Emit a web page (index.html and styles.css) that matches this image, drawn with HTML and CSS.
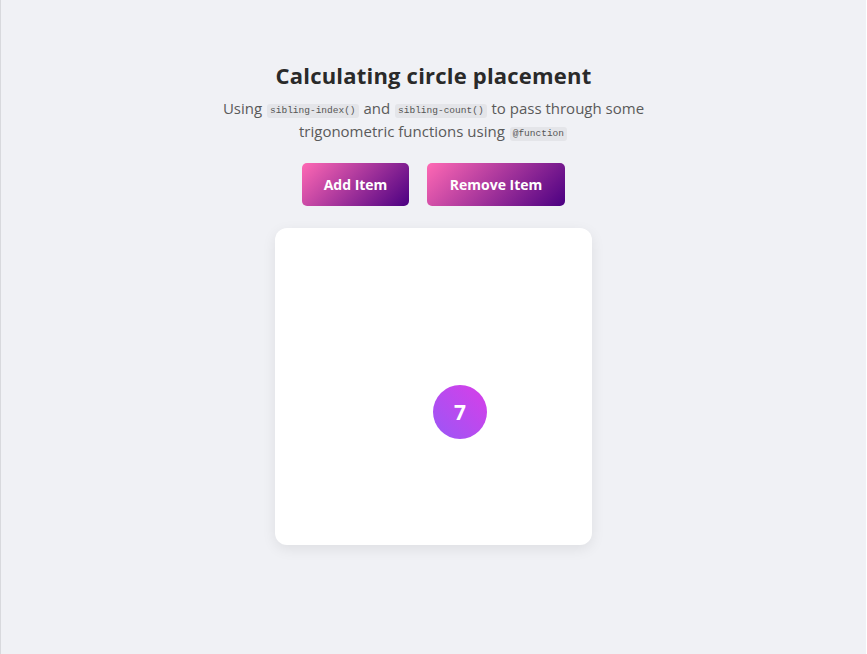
FILE: index.html
```html
<!DOCTYPE html>
<html lang="en">
<head>
<meta charset="utf-8">
<title>Calculating circle placement</title>
<link rel="stylesheet" href="styles.css">
</head>
<body>
<div class="page">
  <h1 class="title">Calculating circle placement</h1>
  <p class="subtitle">Using <code>sibling-index()</code> and <code>sibling-count()</code> to pass through some<br>trigonometric functions using <code>@function</code></p>
  <div class="actions">
    <button class="btn btn-add">Add Item</button>
    <button class="btn btn-remove">Remove Item</button>
  </div>
  <div class="stage">
    <div class="item">7</div>
  </div>
</div>
</body>
</html>
```
FILE: styles.css
```css
html, body {
  margin: 0;
  padding: 0;
}
body {
  background: #f0f1f5;
  font-family: "Open Sans", "DejaVu Sans", sans-serif;
  border-right: 1px solid #ffffff;
}
.page {
  min-height: 654px;
  box-sizing: border-box;
  border-left: 1px solid #d8d9dd;
  display: flex;
  flex-direction: column;
  align-items: center;
  padding-top: 61px;
}
.title {
  margin: 0;
  font-size: 22px;
  font-weight: 700;
  line-height: 28px;
  color: #2a2a2a;
  letter-spacing: 0.2px;
}
.subtitle {
  margin: 8px 0 0;
  text-align: center;
  font-size: 15px;
  line-height: 23px;
  color: #5a5a5a;
}
.subtitle code {
  display: inline-block;
  font-family: "Liberation Mono", "DejaVu Sans Mono", monospace;
  font-size: 9.5px;
  line-height: 14px;
  background: #e4e5e9;
  color: #555;
  padding: 0 3px;
  margin: 0 1px;
  border-radius: 3px;
  vertical-align: 1px;
}
.actions {
  display: flex;
  gap: 18px;
  margin-top: 20px;
}
.btn {
  border: none;
  height: 43px;
  border-radius: 5px;
  color: #ffffff;
  font-family: "Open Sans", "DejaVu Sans", sans-serif;
  font-weight: 700;
  font-size: 14px;
  background: linear-gradient(135deg, #ff69b4, #4b0082);
  padding: 0;
}
.btn-add {
  width: 107px;
}
.btn-remove {
  width: 138px;
}
.stage {
  position: relative;
  margin-top: 22px;
  width: 317px;
  height: 317px;
  background: #ffffff;
  border-radius: 12px;
  box-shadow: 0 4px 14px rgba(0, 0, 0, 0.08);
}
.item {
  position: absolute;
  left: 158px;
  top: 157px;
  width: 54px;
  height: 54px;
  border-radius: 50%;
  background: linear-gradient(45deg, #9a57f6, #d83ee8);
  color: #ffffff;
  font-weight: 700;
  font-size: 21px;
  display: flex;
  align-items: center;
  justify-content: center;
}
```
